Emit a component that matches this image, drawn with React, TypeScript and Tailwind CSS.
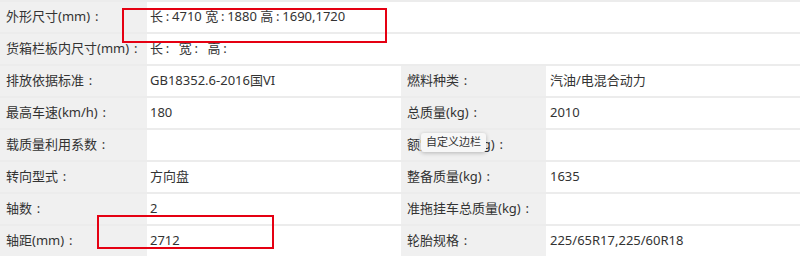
import React from "react";

type Cell = { label: string; value: string };
type Row = { full?: boolean; cells: Cell[] };

const rows: Row[] = [
  { full: true, cells: [{ label: "外形尺寸(mm)：", value: "长：4710 宽：1880 高：1690,1720" }] },
  { full: true, cells: [{ label: "货箱栏板内尺寸(mm)：", value: "长：  宽：  高：" }] },
  {
    cells: [
      { label: "排放依据标准：", value: "GB18352.6-2016国VI" },
      { label: "燃料种类：", value: "汽油/电混合动力" },
    ],
  },
  {
    cells: [
      { label: "最高车速(km/h)：", value: "180" },
      { label: "总质量(kg)：", value: "2010" },
    ],
  },
  {
    cells: [
      { label: "载质量利用系数：", value: "" },
      { label: "额定载质量(kg)：", value: "" },
    ],
  },
  {
    cells: [
      { label: "转向型式：", value: "方向盘" },
      { label: "整备质量(kg)：", value: "1635" },
    ],
  },
  {
    cells: [
      { label: "轴数：", value: "2" },
      { label: "准拖挂车总质量(kg)：", value: "" },
    ],
  },
  {
    cells: [
      { label: "轴距(mm)：", value: "2712" },
      { label: "轮胎规格：", value: "225/65R17,225/60R18" },
    ],
  },
];

// full-width colon drawn centred in its box, like the original font does
const Text = ({ text, colon }: { text: string; colon: string }) => {
  const parts = text.split("：");
  return (
    <>
      {parts.map((p, i) => (
        <React.Fragment key={i}>
          {p}
          {i < parts.length - 1 && <span className={`inline-block text-center ${colon}`}>:</span>}
        </React.Fragment>
      ))}
    </>
  );
};

const Label = ({ text }: { text: string }) => (
  <div className="bg-[#f0f0f0] flex items-center pl-[6px] whitespace-pre">
    <Text text={text} colon="w-[13px]" />
  </div>
);

const Value = ({ text, pad = "pl-[3px]" }: { text: string; pad?: string }) => (
  <div className={`bg-white flex items-center whitespace-pre ${pad}`}>
    <Text text={text} colon="w-[9px]" />
  </div>
);

export default function App() {
  return (
    <div
      className="relative w-[800px] h-[256px] overflow-hidden bg-white text-[13px] text-[#333]"
      style={{ fontFamily: '"Noto Sans", "Noto Sans CJK SC", sans-serif' }}
    >
      {rows.map((row, i) =>
        row.full ? (
          <div key={i} className="grid grid-cols-[147px_1fr] h-[32px] border-t-2 border-[#ececec]">
            <Label text={row.cells[0].label} />
            <Value text={row.cells[0].value} />
          </div>
        ) : (
          <div key={i} className="grid grid-cols-[147px_254px_145px_1fr] h-[32px] border-t-2 border-[#ececec]">
            <Label text={row.cells[0].label} />
            <Value text={row.cells[0].value} />
            <Label text={row.cells[1].label} />
            <Value text={row.cells[1].value} pad="pl-[4px]" />
          </div>
        )
      )}

      {/* red highlight boxes */}
      <div className="absolute left-[122px] top-[8px] w-[265px] h-[35px] border-2 border-[#e50012]" />
      <div className="absolute left-[97px] top-[215px] w-[177px] h-[34px] border-2 border-[#e50012]" />

      {/* tooltip */}
      <div className="absolute left-[421px] top-[133px] h-[19px] px-[5px] flex items-center rounded-[3px] bg-[#f7f7f7] shadow-[0_1px_4px_rgba(0,0,0,0.25)] text-[11px] text-[#333]">
        自定义边栏
      </div>
    </div>
  );
}
